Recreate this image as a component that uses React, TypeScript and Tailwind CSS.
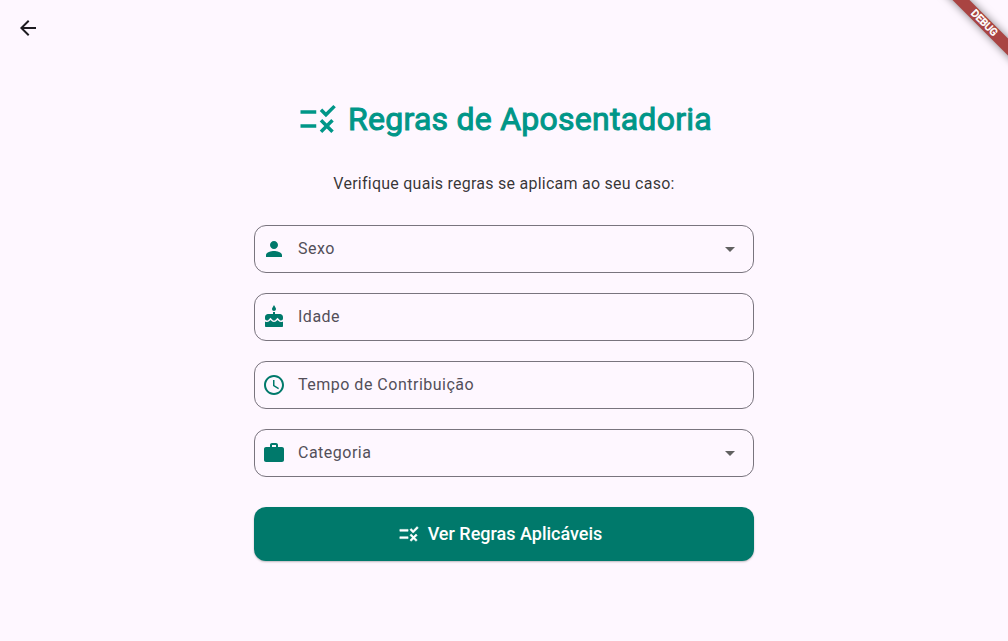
import type { ReactNode } from "react";

function Icon({ d, className }: { d: string; className: string }) {
  return (
    <svg viewBox="0 0 24 24" fill="currentColor" className={className} aria-hidden="true">
      <path d={d} />
    </svg>
  );
}

const rule =
  "M16.54 11L13 7.46l1.41-1.41 2.12 2.12 4.24-4.24 1.41 1.41L16.54 11zM11 7H2v2h9V7zm10 6.41L19.59 12 17 14.59 14.41 12 13 13.41 15.59 16 13 18.59 14.41 20 17 17.41 19.59 20 21 18.59 18.41 16 21 13.41zM11 15H2v2h9v-2z";
const person =
  "M12 12c2.21 0 4-1.79 4-4s-1.79-4-4-4-4 1.79-4 4 1.79 4 4 4zm0 2c-2.67 0-8 1.34-8 4v2h16v-2c0-2.66-5.33-4-8-4z";
const cake =
  "M12 6c1.11 0 2-.9 2-2 0-.38-.1-.73-.29-1.03L12 0l-1.71 2.97c-.19.3-.29.65-.29 1.03 0 1.1.9 2 2 2zm4.6 9.99l-1.07-1.07-1.08 1.07c-1.3 1.3-3.58 1.31-4.89 0l-1.07-1.07-1.09 1.07C6.75 16.64 5.88 17 4.96 17c-.73 0-1.4-.23-1.96-.61V21c0 .55.45 1 1 1h16c.55 0 1-.45 1-1v-4.61c-.56.38-1.23.61-1.96.61-.92 0-1.79-.36-2.44-1.01zM18 9h-5V7h-2v2H6c-1.66 0-3 1.34-3 3v1.54c0 1.08.88 1.96 1.96 1.96.52 0 1.02-.2 1.38-.57l2.14-2.13 2.13 2.13c.74.74 2.03.74 2.77 0l2.14-2.13 2.13 2.13c.37.37.86.57 1.38.57 1.08 0 1.96-.88 1.96-1.96V12C21 10.34 19.66 9 18 9z";
const clock =
  "M11.99 2C6.47 2 2 6.48 2 12s4.47 10 9.99 10C17.52 22 22 17.52 22 12S17.52 2 11.99 2zM12 20c-4.42 0-8-3.58-8-8s3.58-8 8-8 8 3.58 8 8-3.58 8-8 8zm.5-13H11v6l5.25 3.15.75-1.23-4.5-2.67z";
const work =
  "M20 6h-4V4c0-1.11-.89-2-2-2h-4c-1.11 0-2 .89-2 2v2H4c-1.11 0-1.99.89-1.99 2L2 19c0 1.11.89 2 2 2h16c1.11 0 2-.89 2-2V8c0-1.11-.89-2-2-2zm-6 0h-4V4h4v2z";
const arrowBack = "M20 11H7.83l5.59-5.59L12 4l-8 8 8 8 1.41-1.41L7.83 13H20v-2z";
const dropDown = "M7 10l5 5 5-5z";

function Field({ icon, label, select }: { icon: string; label: ReactNode; select?: boolean }) {
  return (
    <div className="flex h-12 w-full items-center rounded-xl border border-[#79747e] pl-[7px] pr-[11px]">
      <Icon d={icon} className="size-6 text-[#00796b]" />
      <span className="ml-3 flex-1 text-base leading-6 tracking-[0.5px] text-[#534f59]">{label}</span>
      {select && <Icon d={dropDown} className="size-6 text-[#616161]" />}
    </div>
  );
}

export default function App() {
  return (
    <div className="relative flex h-[641px] w-full flex-col overflow-hidden bg-[#fef7ff] font-[Roboto,sans-serif]">
      <header className="flex h-14 items-center pl-4">
        <button aria-label="Voltar">
          <Icon d={arrowBack} className="size-6 text-[#1d1b20]" />
        </button>
      </header>
      <main className="mx-auto flex w-[500px] flex-col items-center pt-10">
        <h1 className="flex h-[46px] items-center gap-[9px] pl-px text-[32px] font-normal text-[#009688]">
          <Icon d={rule} className="size-[42px]" />
          <span className="tracking-[0.25px] [-webkit-text-stroke:1px_currentColor]">Regras de Aposentadoria</span>
        </h1>
        <p className="mt-[30px] text-base leading-6 tracking-[0.25px] text-black/80">
          Verifique quais regras se aplicam ao seu caso:
        </p>
        <form className="mt-[29px] flex w-full flex-col gap-5">
          <Field icon={person} label="Sexo" select />
          <Field icon={cake} label="Idade" />
          <Field icon={clock} label="Tempo de Contribuição" />
          <Field icon={work} label="Categoria" select />
          <button
            type="button"
            className="mt-2.5 flex h-[54px] items-center justify-center gap-2 rounded-xl bg-[#00796b] pr-2 text-lg font-medium text-white shadow-[0_1px_2px_rgba(0,0,0,0.25)]"
          >
            <Icon d={rule} className="size-[22px] stroke-current stroke-[0.6]" />
            <span>Ver Regras Aplicáveis</span>
          </button>
        </form>
      </main>
      <div className="absolute -right-10 top-[17px] flex h-3 w-32 rotate-45 items-center justify-center bg-[#a94442] text-[10.2px] font-normal text-white shadow-[0_0_8px_rgba(0,0,0,0.5)]">
        <span className="[-webkit-text-stroke:0.6px_currentColor]">DEBUG</span>
      </div>
    </div>
  );
}
